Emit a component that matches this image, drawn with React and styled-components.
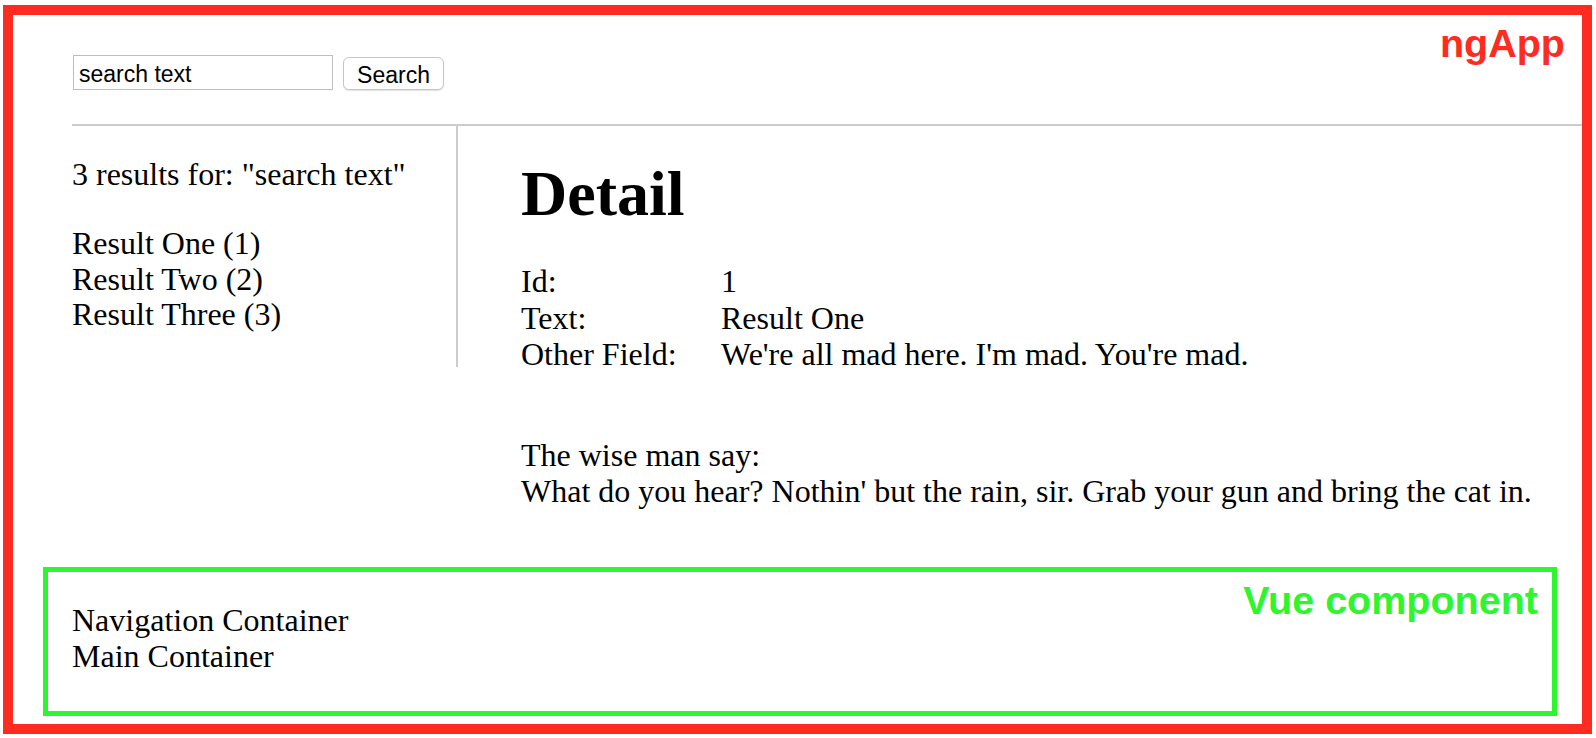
import React from 'react'
import styled, { createGlobalStyle } from 'styled-components'

const RED = '#fe2b21'
const GREEN = '#2df52e'
const RULE = '#cccccc'

const GlobalStyle = createGlobalStyle`
  html, body {
    margin: 0;
    padding: 0;
    background: #fff;
  }
  body {
    font-family: "Liberation Serif", "Times New Roman", serif;
    color: #000;
  }
`

const AppFrame = styled.div`
    position: relative;
    box-sizing: border-box;
    height: 729px;
    margin: 5px 4px 4px 3px;
    border: 10px solid ${RED};
    display: flex;
    flex-direction: column;
`

// the "ngApp" / "Vue component" labels sitting in the corner of each box
const Tag = styled.span`
    position: absolute;
    top: ${p => p.$top}px;
    right: ${p => p.$right}px;
    font-family: "Liberation Sans", Arial, sans-serif;
    font-weight: bold;
    font-size: 39.5px;
    line-height: 44px;
    color: ${p => p.$color};
`

const SearchBar = styled.div`
    box-sizing: border-box;
    height: 109px;
    padding: 40px 0 0 60px;
    display: flex;
    align-items: flex-start;
    gap: 10px;
`

const SearchInput = styled.input`
    box-sizing: border-box;
    width: 260px;
    height: 35px;
    margin: 0;
    padding: 4px 5px 0;
    border: 1px solid #bdbdbd;
    border-radius: 0;
    outline: none;
    font-family: "Liberation Sans", Arial, sans-serif;
    font-size: 23px;
    color: #000;
`

const SearchButton = styled.button`
    box-sizing: border-box;
    margin-top: 2px;
    width: 101px;
    height: 33px;
    padding: 3px 0 0;
    border: 1px solid #c6c6c6;
    border-radius: 6px;
    background: #fff;
    box-shadow: 0 1px 1px rgba(0, 0, 0, 0.12);
    font-family: "Liberation Sans", Arial, sans-serif;
    font-size: 23px;
    color: #000;
`

const Divider = styled.div`
    height: 2px;
    margin-left: 59px;
    background: ${RULE};
`

const Content = styled.div`
    flex: 1;
    display: flex;
    align-items: flex-start;
    font-size: 32px;
`

const ResultsPane = styled.div`
    box-sizing: border-box;
    width: 386px;
    height: 241px;
    margin-left: 59px;
    padding-top: 30px;
    border-right: 2px solid ${RULE};
    line-height: 36px;
`

const Summary = styled.p`
    margin: 0 0 34px;
`

const ResultList = styled.ul`
    list-style: none;
    margin: 0;
    padding: 0;
    line-height: 35.5px;
`

const DetailPane = styled.div`
    padding: 31px 0 0 63px;
`

const Title = styled.h1`
    margin: 0;
    font-size: 64px;
    line-height: 74px;
    font-weight: bold;
`

const FieldTable = styled.table`
    margin-top: 32px;
    border-collapse: collapse;
    line-height: 36.5px;

    td {
        padding: 0;
        vertical-align: top;
    }
    td:first-child {
        width: 200px;
    }
`

const Quote = styled.p`
    margin: 64px 0 0;
    line-height: 36.5px;
`

const VueBox = styled.div`
    position: relative;
    box-sizing: border-box;
    height: 149px;
    margin: 0 25px 8px 30px;
    padding: 30px 0 0 24px;
    border: 5px solid ${GREEN};
    font-size: 32px;
    line-height: 36px;
`

const results = [
    { id: 1, text: 'Result One' },
    { id: 2, text: 'Result Two' },
    { id: 3, text: 'Result Three' },
]

const fields = [
    ['Id:', '1'],
    ['Text:', 'Result One'],
    ['Other Field:', "We're all mad here. I'm mad. You're mad."],
]

const App = () => {
    return (
        <>
            <GlobalStyle/>
            <AppFrame>
                <Tag $top={6} $right={17} $color={RED}>ngApp</Tag>
                <SearchBar>
                    <SearchInput defaultValue="search text"/>
                    <SearchButton>Search</SearchButton>
                </SearchBar>
                <Divider/>
                <Content>
                    <ResultsPane>
                        <Summary>3 results for: "search text"</Summary>
                        <ResultList>
                            {results.map(r => <li key={r.id}>{r.text} ({r.id})</li>)}
                        </ResultList>
                    </ResultsPane>
                    <DetailPane>
                        <Title>Detail</Title>
                        <FieldTable>
                            <tbody>
                                {fields.map(([label, value]) => (
                                    <tr key={label}><td>{label}</td><td>{value}</td></tr>
                                ))}
                            </tbody>
                        </FieldTable>
                        <Quote>
                            The wise man say:<br/>
                            What do you hear? Nothin' but the rain, sir. Grab your gun and bring the cat in.
                        </Quote>
                    </DetailPane>
                </Content>
                <VueBox>
                    <Tag $top={6} $right={14} $color={GREEN}>Vue component</Tag>
                    <div>Navigation Container</div>
                    <div>Main Container</div>
                </VueBox>
            </AppFrame>
        </>
    )
}

export default App
